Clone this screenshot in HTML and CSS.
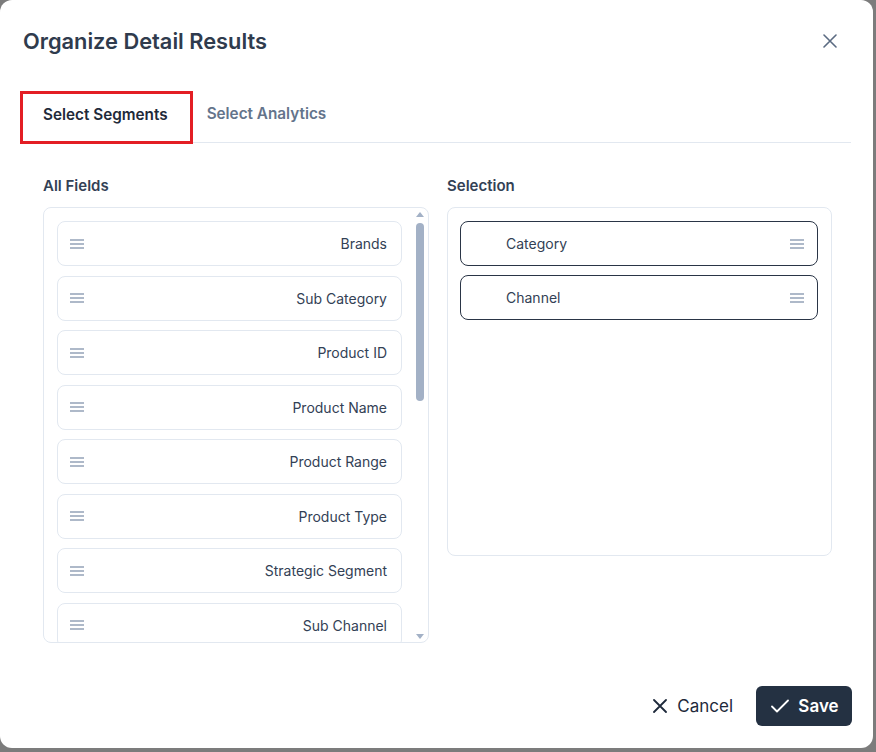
FILE: index.html
```html
<!DOCTYPE html>
<html lang="en">
<head>
<meta charset="utf-8">
<title>Organize Detail Results</title>
<link rel="stylesheet" href="styles.css">
</head>
<body>
<div class="dialog">
  <div class="header">
    <h1 class="title">Organize Detail Results</h1>
    <button class="close" aria-label="Close">
      <svg width="14" height="14" viewBox="0 0 14 14"><path d="M1 1L13 13M13 1L1 13" stroke="#5b6b82" stroke-width="1.6" stroke-linecap="round" fill="none"/></svg>
    </button>
  </div>
  <div class="tabs">
    <div class="tab active">Select Segments</div>
    <div class="tab">Select Analytics</div>
  </div>
  <div class="content">
    <div class="col col-left">
      <div class="label">All Fields</div>
      <div class="box box-left">
        <div class="list">
          <div class="item"><svg class="drag" width="14" height="10" viewBox="0 0 14 10"><path d="M0 1H14M0 5H14M0 9H14" stroke="#94a3b8" stroke-width="1.5"/></svg><span>Brands</span></div>
          <div class="item"><svg class="drag" width="14" height="10" viewBox="0 0 14 10"><path d="M0 1H14M0 5H14M0 9H14" stroke="#94a3b8" stroke-width="1.5"/></svg><span>Sub Category</span></div>
          <div class="item"><svg class="drag" width="14" height="10" viewBox="0 0 14 10"><path d="M0 1H14M0 5H14M0 9H14" stroke="#94a3b8" stroke-width="1.5"/></svg><span>Product ID</span></div>
          <div class="item"><svg class="drag" width="14" height="10" viewBox="0 0 14 10"><path d="M0 1H14M0 5H14M0 9H14" stroke="#94a3b8" stroke-width="1.5"/></svg><span>Product Name</span></div>
          <div class="item"><svg class="drag" width="14" height="10" viewBox="0 0 14 10"><path d="M0 1H14M0 5H14M0 9H14" stroke="#94a3b8" stroke-width="1.5"/></svg><span>Product Range</span></div>
          <div class="item"><svg class="drag" width="14" height="10" viewBox="0 0 14 10"><path d="M0 1H14M0 5H14M0 9H14" stroke="#94a3b8" stroke-width="1.5"/></svg><span>Product Type</span></div>
          <div class="item"><svg class="drag" width="14" height="10" viewBox="0 0 14 10"><path d="M0 1H14M0 5H14M0 9H14" stroke="#94a3b8" stroke-width="1.5"/></svg><span>Strategic Segment</span></div>
          <div class="item"><svg class="drag" width="14" height="10" viewBox="0 0 14 10"><path d="M0 1H14M0 5H14M0 9H14" stroke="#94a3b8" stroke-width="1.5"/></svg><span>Sub Channel</span></div>
        </div>
        <div class="scrollbar">
          <span class="arrow up"></span>
          <span class="thumb"></span>
          <span class="arrow down"></span>
        </div>
      </div>
    </div>
    <div class="col col-right">
      <div class="label">Selection</div>
      <div class="box box-right">
        <div class="item selected"><span>Category</span><svg class="drag" width="14" height="10" viewBox="0 0 14 10"><path d="M0 1H14M0 5H14M0 9H14" stroke="#94a3b8" stroke-width="1.5"/></svg></div>
        <div class="item selected"><span>Channel</span><svg class="drag" width="14" height="10" viewBox="0 0 14 10"><path d="M0 1H14M0 5H14M0 9H14" stroke="#94a3b8" stroke-width="1.5"/></svg></div>
      </div>
    </div>
  </div>
  <div class="footer">
    <button class="btn-cancel">
      <svg width="14" height="14" viewBox="0 0 14 14"><path d="M1 1L13 13M13 1L1 13" stroke="#1e293b" stroke-width="1.8" stroke-linecap="round" fill="none"/></svg>
      <span>Cancel</span>
    </button>
    <button class="btn-save">
      <svg width="18" height="14" viewBox="0 0 18 14"><path d="M1 7.5L6 12.5L17 1.5" stroke="#ffffff" stroke-width="1.8" stroke-linecap="round" stroke-linejoin="round" fill="none"/></svg>
      <span>Save</span>
    </button>
  </div>
</div>
</body>
</html>
```

FILE: styles.css
```css
* { box-sizing: border-box; }

html, body {
  margin: 0;
  padding: 0;
  height: 100%;
}

body {
  background: #7c7c7c;
  font-family: Inter, "Noto Sans", "Liberation Sans", sans-serif;
  color: #334155;
}

.dialog {
  width: 873px;
  height: 748px;
  background: #ffffff;
  border-radius: 12px;
  display: flex;
  flex-direction: column;
  overflow: hidden;
}

.header {
  display: flex;
  align-items: center;
  justify-content: space-between;
  height: 28px;
  margin-top: 27px;
  padding: 0 36px 0 23px;
}

.title {
  margin: 0;
  font-size: 21.8px;
  line-height: 28px;
  font-weight: 600;
  color: #2f3b4d;
}

.close {
  border: 0;
  background: none;
  padding: 0;
  width: 14px;
  height: 14px;
  display: flex;
}

.tabs {
  display: flex;
  align-items: flex-start;
  height: 52px;
  margin: 36px 22px 0 20px;
  border-bottom: 1px solid #e2e8f0;
}

.tab {
  height: 51px;
  display: flex;
  align-items: center;
  padding: 0 14px 6px;
  font-size: 15.3px;
  font-weight: 600;
  color: #64748b;
  white-space: nowrap;
}

.tab.active {
  height: 53px;
  padding: 0 22px 7px 20px;
  border: 3px solid #e31e24;
  color: #1f2a3a;
  position: relative;
  z-index: 1;
}

.content {
  display: flex;
  gap: 18px;
  margin-top: 33px;
  padding: 0 42px 0 43px;
}

.col-left { width: 386px; }
.col-right { width: 384px; }

.label {
  font-size: 15px;
  line-height: 20px;
  font-weight: 600;
  color: #334155;
  margin-bottom: 11px;
}

.box {
  border: 1px solid #e2e8f0;
  border-radius: 8px;
  background: #ffffff;
}

.box-left {
  height: 436px;
  position: relative;
  overflow: hidden;
}

.list {
  padding: 13px 26px 0 13px;
  display: flex;
  flex-direction: column;
  gap: 9.5px;
}

.item {
  height: 45px;
  border: 1px solid #e2e8f0;
  border-radius: 8px;
  display: flex;
  align-items: center;
  justify-content: space-between;
  padding: 0 14px 0 12px;
  font-size: 14px;
  color: #334155;
  background: #ffffff;
  flex-shrink: 0;
}

.drag { flex-shrink: 0; }

.scrollbar {
  position: absolute;
  top: 3px;
  right: 3px;
  bottom: 3px;
  width: 10px;
  display: flex;
  flex-direction: column;
  align-items: center;
}

.arrow {
  width: 0;
  height: 0;
  border-left: 4px solid transparent;
  border-right: 4px solid transparent;
}

.arrow.up {
  border-bottom: 5px solid #a3b1c6;
  margin-top: 1px;
}

.arrow.down {
  border-top: 5px solid #a3b1c6;
  margin-top: auto;
  margin-bottom: 0;
}

.thumb {
  width: 8px;
  height: 178px;
  margin-top: 6px;
  border-radius: 4px;
  background: #a3b1c6;
}

.box-right {
  width: 385px;
  height: 349px;
  padding: 13px 13px 0 12px;
  display: flex;
  flex-direction: column;
  gap: 9px;
}

.item.selected {
  border-color: #2a3546;
  padding: 0 13px 0 45px;
}

.footer {
  margin-top: auto;
  display: flex;
  justify-content: flex-end;
  align-items: center;
  gap: 23px;
  padding: 0 21px 22px 0;
}

.btn-cancel {
  border: 0;
  background: none;
  padding: 0;
  display: flex;
  align-items: center;
  gap: 10px;
  font-family: inherit;
  font-size: 17px;
  color: #1e293b;
}

.btn-save {
  width: 96px;
  height: 40px;
  border: 0;
  border-radius: 6px;
  background: #243142;
  color: #ffffff;
  display: flex;
  align-items: center;
  justify-content: center;
  gap: 9px;
  font-family: inherit;
  font-size: 17px;
  font-weight: 600;
  padding: 0 0 0 2px;
}
```
